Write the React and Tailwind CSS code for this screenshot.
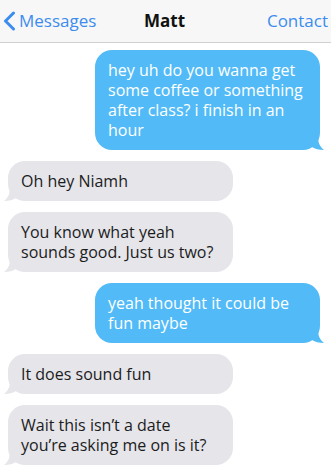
import React from 'react';

const MESSAGES = [
  { me: true, text: 'hey uh do you wanna get some coffee or something after class? i finish in an hour' },
  { me: false, text: 'Oh hey Niamh' },
  { me: false, text: 'You know what yeah sounds good. Just us two?' },
  { me: true, text: 'yeah thought it could be fun maybe' },
  { me: false, text: 'It does sound fun' },
  { me: false, text: 'Wait this isn\u2019t a date you\u2019re asking me on is it?' },
];

const Tail = ({ me }) => (
  <svg
    width="12"
    height="14"
    viewBox="0 0 12 14"
    className={`absolute bottom-0 ${me ? '-right-[4px]' : '-left-[4px] -scale-x-100'}`}
  >
    <path d="M0 0 L6 0 C6 7 8 11 12 14 C7 14 3 13 0 11 Z" fill={me ? '#52bbf7' : '#e5e5ea'} />
  </svg>
);

const Bubble = ({ me, text }) => (
  <div className={`relative w-[225px] ${me ? 'self-end mr-[11px]' : 'self-start ml-[8px]'}`}>
    <Tail me={me} />
    <div
      className={`relative rounded-[17px] pl-[13px] pr-[16px] py-[10px] text-[16px] leading-[20px] ${
        me ? 'bg-[#52bbf7] text-white' : 'bg-[#e5e5ea] text-[#1c1c1c]'
      }`}
    >
      {text}
    </div>
  </div>
);

export default function App() {
  return (
    <div className="w-[331px] h-[468px] overflow-hidden bg-white font-['Open_Sans',sans-serif]">
      <div className="h-[43px] bg-[#f7f7f7] border-b border-[#d0d0d0] flex items-center justify-between pl-[3px] pr-[3px] relative">
        <div className="flex items-center text-[#3b8cf0] text-[17px]">
          <svg width="13" height="20" viewBox="0 0 13 20" className="mr-[3px]">
            <path d="M10.5 2 L2.5 10 L10.5 18" fill="none" stroke="#3b8cf0" strokeWidth="3" strokeLinecap="round" strokeLinejoin="round" />
          </svg>
          <span>Messages</span>
        </div>
        <div className="absolute left-[144px] text-[17px] font-bold text-[#111]">Matt</div>
        <div className="text-[#3b8cf0] text-[17px]">Contact</div>
      </div>
      <div className="flex flex-col gap-[11px] pt-[7px]">
        {MESSAGES.map((m, i) => (
          <Bubble key={i} me={m.me} text={m.text} />
        ))}
      </div>
    </div>
  );
}
